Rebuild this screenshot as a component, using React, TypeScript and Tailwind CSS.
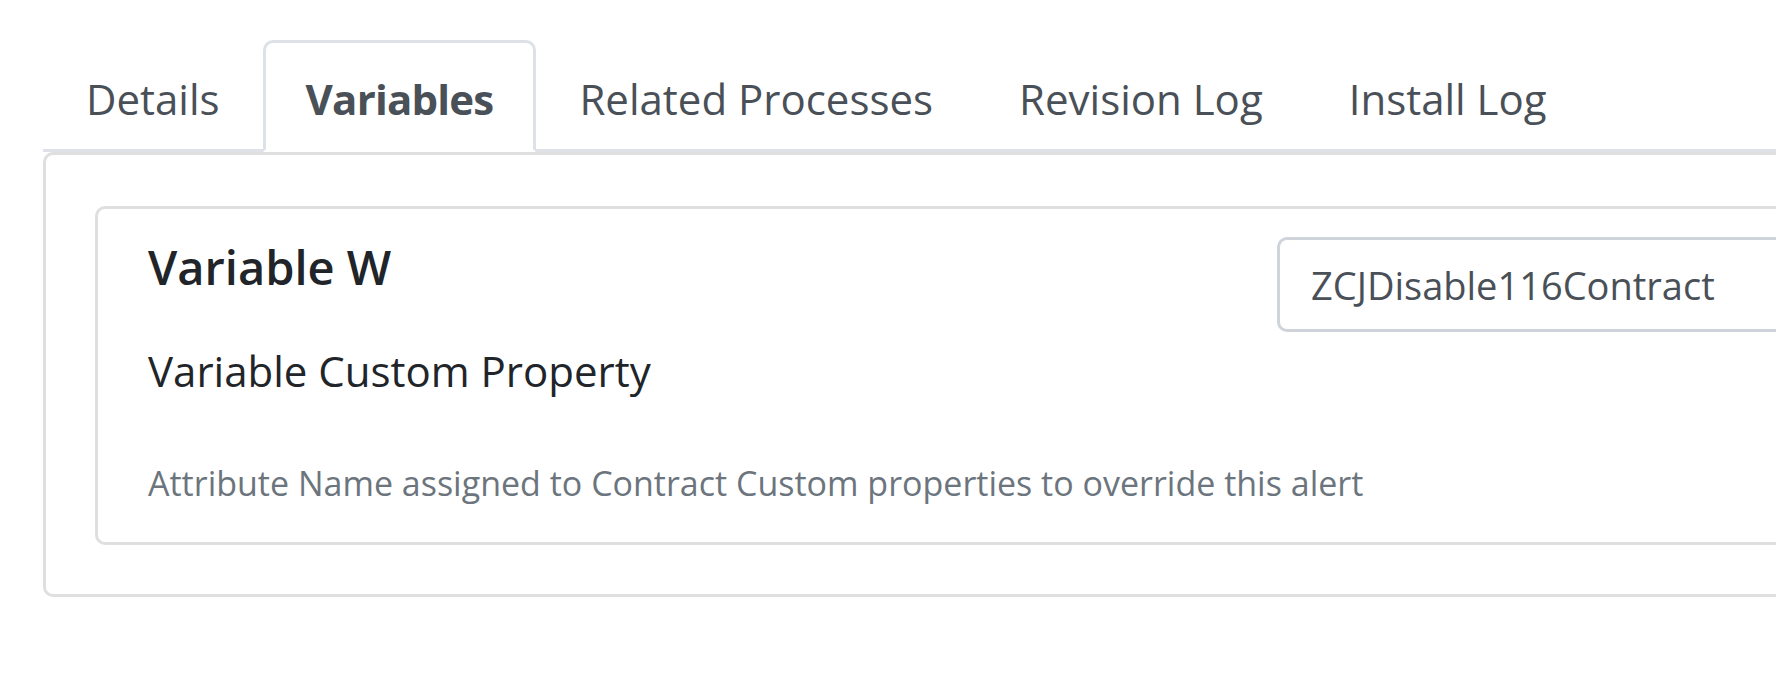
import React from "react";

// tabs across the top of the record view
const TABS = ["Details", "Variables", "Related Processes", "Revision Log", "Install Log"];
const ACTIVE = "Variables";

const font = "font-['Open_Sans','Noto_Sans',sans-serif]";

export default function App() {
  return (
    <div className={`w-[1776px] h-[678px] overflow-hidden bg-white ${font}`}>
      <div className="ml-[43px] w-[1900px] pt-[40px]">
        {/* ── Tab strip ───────────────────────────────────────── */}
        <ul className="flex border-b-[3px] border-[#dee2e6]">
          {TABS.map((t) => {
            const active = t === ACTIVE;
            return (
              <li key={t} className="-mb-[3px]">
                <a
                  className={`block border-[3px] rounded-t-[10px] px-[40px] pt-[26px] pb-[20px] text-[42px] leading-[60px] text-[#495057] whitespace-nowrap ${
                    active
                      ? "bg-white border-[#dee2e6] border-b-white font-bold tracking-[-0.8px]"
                      : "border-transparent"
                  }`}
                >
                  {t}
                </a>
              </li>
            );
          })}
        </ul>

        {/* ── Tab panel ───────────────────────────────────────── */}
        <div className="border-[3px] border-[#dfdfdf] rounded-b-[10px] rounded-tl-[10px] pt-[51px] px-[49px] pb-[49px]">
          <div className="border-[3px] border-[#dfdfdf] rounded-[10px] pl-[50px] pt-[28px] pb-[35px]">
            <div className="flex">
              <div className="w-[1129px] shrink-0">
                <h4 className="mt-[2px] text-[47px] leading-[56px] font-semibold text-[#212529]">
                  Variable W
                </h4>
                <p className="mt-[48px] text-[42px] leading-[56px] text-[#212529]">
                  Variable Custom Property
                </p>
              </div>
              <div className="w-[600px] shrink-0">
                <input
                  readOnly
                  value="ZCJDisable116Contract"
                  className={`w-full h-[95px] border-[3px] border-[#ced4da] rounded-[10px] pl-[31px] text-[38px] text-[#495057] outline-none ${font}`}
                />
              </div>
            </div>
            <p className="mt-[60px] text-[34px] leading-[48px] text-[#6c757d] whitespace-nowrap">
              Attribute Name assigned to Contract Custom properties to override this alert
            </p>
          </div>
        </div>
      </div>
    </div>
  );
}
